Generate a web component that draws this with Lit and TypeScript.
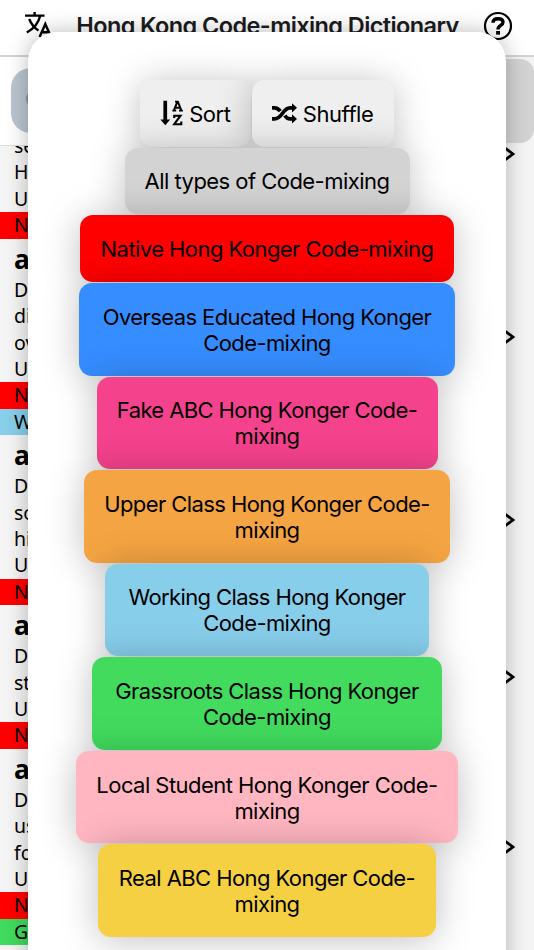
import { LitElement, html, css, svg } from "lit";
import { customElement } from "lit/decorators.js";
import { styleMap } from "lit/directives/style-map.js";

interface Entry { head: string; lines: string[]; tags: [string, string][]; }
interface Choice { lines: string[]; color: string; width: number; spacing: number; }

const RED = "#ff0000";
const entries: Entry[] = [
  { head: "", lines: ["", "se", "H", "U"], tags: [["N", RED]] },
  { head: "a", lines: ["D", "di", "ov", "U"], tags: [["N", RED], ["W", "#87ceeb"]] },
  { head: "a", lines: ["D", "so", "hi", "U"], tags: [["N", RED]] },
  { head: "a", lines: ["D", "st", "U"], tags: [["N", RED]] },
  { head: "a", lines: ["D", "us", "fo", "U"], tags: [["N", RED], ["G", "#40da5e"]] },
];

const choices: Choice[] = [
  { lines: ["All types of Code-mixing"], color: "#d3d3d3", width: 285, spacing: -0.54 },
  { lines: ["Native Hong Konger Code-mixing"], color: RED, width: 373.5, spacing: -0.56 },
  { lines: ["Overseas Educated Hong Konger", "Code-mixing"], color: "#368dff", width: 376, spacing: -0.6 },
  { lines: ["Fake ABC Hong Konger Code-", "mixing"], color: "#f5428d", width: 341, spacing: -0.6 },
  { lines: ["Upper Class Hong Konger Code-", "mixing"], color: "#f4a442", width: 366.5, spacing: -0.58 },
  { lines: ["Working Class Hong Konger", "Code-mixing"], color: "#87ceeb", width: 324, spacing: -0.62 },
  { lines: ["Grassroots Class Hong Konger", "Code-mixing"], color: "#42db5e", width: 350.5, spacing: -0.57 },
  { lines: ["Local Student Hong Konger Code-", "mixing"], color: "#ffb6c1", width: 382, spacing: -0.54 },
  { lines: ["Real ABC Hong Konger Code-", "mixing"], color: "#f5d042", width: 337.5, spacing: -0.58 },
];

const translateIcon = html`<svg viewBox="0 0 28 28" width="28" height="28">${svg`
  <g fill="none" stroke="#000" stroke-width="2.4">
    <path d="M1 4.6H20.5M10.6 1V4.6M5.2 8C7.5 13.5 11 17.5 14.5 19.5M16.2 4.8C14.5 12 9.5 18 2.8 21.5"/>
    <path d="M15.6 26L21.3 13L27 26M17.5 21.2H25.2"/>
  </g>`}</svg>`;

const helpIcon = html`<svg viewBox="0 0 30 30" width="30" height="30">${svg`
  <circle cx="15" cy="15" r="13" fill="none" stroke="#000" stroke-width="2.2"/>
  <path d="M10 11.8C10 8.8 12 7.8 15 7.8C18.2 7.8 20 9 20 11.3C20 14.6 15 14.4 15 18.4" fill="none" stroke="#000" stroke-width="3.4"/>
  <rect x="13.1" y="20" width="3.9" height="3.6"/>`}</svg>`;

const sortIcon = html`<svg viewBox="0 0 24 28" width="24" height="28">${svg`
  <path d="M3.4 .8H7.1V19.6H10.2L5.3 25.2L.4 19.6H3.4Z"/>
  <g fill="none" stroke="#000">
    <path d="M14 10.2L17.2 2.1H18L21.2 10.2M14.8 7.7H20.4" stroke-width="2"/>
    <path d="M12.4 10.6H16.2M19 10.6H22.9M15 1.6H18.3" stroke-width="1.7"/>
    <path d="M14.2 18V15.7H20.5L14.2 24.2H21.3V21.6" stroke-width="2.1"/>
  </g>`}</svg>`;

const shuffleIcon = html`<svg viewBox="0 0 25 22" width="25" height="22">${svg`
  <g fill="none" stroke="#000" stroke-width="3.7">
    <path d="M0 4.8H2.5C5 4.8 6.8 6.2 8.3 8.2"/>
    <path d="M0 15.9H2.5C10.5 15.9 10.5 4.8 18 4.8H20.8"/>
    <path d="M12.8 12.5C14.2 14.7 15.8 15.9 18 15.9H20.8"/>
  </g>
  <path d="M20 .2L25 4.8L20 9.4ZM20 11.3L25 15.9L20 20.5Z"/>`}</svg>`;

@customElement("app-root")
export class AppRoot extends LitElement {
  static styles = css`
    :host { display: block; position: relative; width: 534px; height: 950px; overflow: hidden; background: #fff; color: #000; }
    * { box-sizing: border-box; }
    svg { display: block; flex: none; }
    .page { height: 950px; display: flex; flex-direction: column; }
    header { height: 57px; flex: none; border-bottom: 2px solid #d4d4d4; display: flex; justify-content: space-between; padding: 11px 21px 0 24px; }
    h1 { margin: 1px 0 0; font: 600 23.5px/28px Inter, "Liberation Sans", sans-serif; letter-spacing: -0.6px; color: #1c1c1e; white-space: nowrap; }
    .tools { height: 89px; flex: none; display: flex; justify-content: space-between; align-items: flex-start; border-bottom: 1px solid #dcdcdc; }
    .search { margin: 11px 0 0 11px; width: 220px; height: 65px; border-radius: 20px; background: #bac5d1; padding: 22px 15px; }
    .lens { width: 18px; height: 18px; border: 3px solid #8593a1; border-radius: 50%; }
    .side { width: 150px; height: 89px; background: #f3f3f3; padding-top: 2px; }
    .filter { height: 84px; border-radius: 14px; background: #d3d3d3; }
    .list { flex: 1; min-height: 0; overflow: hidden; background: #f4f4f4; font: 19.5px/26.4px "Noto Sans", "Open Sans", sans-serif; }
    .entry { display: flex; align-items: center; }
    .entry:first-child { margin-top: -77.4px; }
    .body { flex: 1; }
    .head { font-weight: 700; font-size: 26.5px; line-height: 38.1px; padding: 1px 14px 0; height: 38.1px; }
    .line { padding-left: 14px; height: 26.4px; }
    .tag { width: 490px; }
    .chev { margin-right: 18px; }
    .sheet { position: absolute; left: 28px; top: 32px; width: 478px; height: 960px; border-radius: 29px; background: #fff; box-shadow: 0 0 22px rgba(0,0,0,.27); padding-top: 48px; display: flex; flex-direction: column; align-items: center; gap: 1px; font: 22px/26px Inter, "Liberation Sans", sans-serif; }
    .row { display: flex; gap: 1.6px; }
    .btn { position: relative; border-radius: 13px; box-shadow: 0 3px 36px rgba(0,0,0,.25); padding: 20.7px 0 19.9px; text-align: center; white-space: nowrap; background: #efefef; }
    .icon { display: flex; align-items: center; height: 66.8px; padding: 1.6px 0 0 20px; gap: 5px; letter-spacing: -0.45px; }
    .sort { width: 110.5px; }
    .shuffle { width: 141.5px; padding-left: 19.5px; gap: 6px; }
  `;

  render() {
    return html`
      <div class="page">
        <header>${translateIcon}<h1>Hong Kong Code-mixing Dictionary</h1>${helpIcon}</header>
        <div class="tools">
          <div class="search"><div class="lens"></div></div>
          <div class="side"><div class="filter"></div></div>
        </div>
        <div class="list">
          ${entries.map((e) => html`<div class="entry">
            <div class="body">
              <div class="head">${e.head}</div>
              ${e.lines.map((l) => html`<div class="line">${l}</div>`)}
              ${e.tags.map(([t, c]) => html`<div class="line tag" style=${styleMap({ background: c })}>${t}</div>`)}
            </div>
            <svg class="chev" width="14" height="18" viewBox="0 0 14 18"><path d="M2 2.3L11 9L2 15.7" fill="none" stroke="#000" stroke-width="2.7"/></svg>
          </div>`)}
        </div>
      </div>
      <div class="sheet">
        <div class="row">
          <div class="btn icon sort">${sortIcon}<span>Sort</span></div>
          <div class="btn icon shuffle">${shuffleIcon}<span>Shuffle</span></div>
        </div>
        ${choices.map((c) => html`<div class="btn" style=${styleMap({ width: c.width + "px", background: c.color, letterSpacing: c.spacing + "px" })}>${c.lines.map((l) => html`<div>${l}</div>`)}</div>`)}
      </div>`;
  }
}
